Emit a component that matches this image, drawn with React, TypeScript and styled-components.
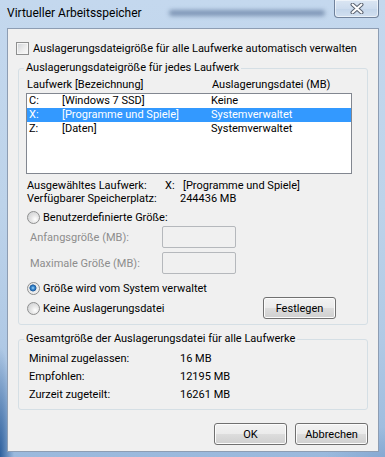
import React from "react";
import styled, { createGlobalStyle } from "styled-components";

const GlobalStyle = createGlobalStyle`
  html, body {
    margin: 0;
    padding: 0;
  }
  body {
    background: #5b86b8;
    font-family: Roboto, "Noto Sans", sans-serif;
    font-size: 11px;
    color: #000;
  }
`;

const Window = styled.div`
  width: 385px;
  height: 457px;
  box-sizing: border-box;
  display: flex;
  flex-direction: column;
  padding: 0 6px 5px 7px;
  background:
    radial-gradient(ellipse 14px 110px at 0 100%, #2d5f9c 0%, rgba(45, 95, 156, 0) 100%),
    radial-gradient(ellipse 60px 30px at 100% 100%, #86a9d2 0%, rgba(134, 169, 210, 0) 100%),
    linear-gradient(180deg, #c4d8ee 0%, #bdd3ea 45%, #b0c9e5 75%, #9ab9dd 100%);
`;

const TitleBar = styled.div`
  height: 28px;
  display: flex;
  align-items: flex-start;
`;

const Title = styled.span`
  padding-top: 5px;
  line-height: 16px;
  font-size: 12px;
  color: #000;
`;

/* blurred content of the window behind the glass */
const GlassBlur = styled.div`
  margin: 10px 0 0 27px;
  width: 156px;
  height: 6px;
  border-radius: 3px;
  background: rgba(70, 95, 135, 0.55);
  filter: blur(2px);
`;

const CloseButton = styled.div`
  margin-left: auto;
  width: 45px;
  height: 18px;
  box-sizing: border-box;
  display: flex;
  align-items: center;
  justify-content: center;
  border: 1px solid rgba(70, 90, 120, 0.7);
  border-top: none;
  border-radius: 0 0 4px 4px;
  background: linear-gradient(180deg, #dbe6f3 0%, #cddcee 50%, #c3d5ea 51%, #d2e0f0 100%);
  box-shadow: inset 0 0 0 1px rgba(255, 255, 255, 0.55);
`;

const CloseGlyph = () => (
  <svg width="14" height="11" viewBox="0 0 14 11">
    <path d="M2.5 1.5 L11.5 9.5 M11.5 1.5 L2.5 9.5" stroke="#5a6270" strokeWidth="4" strokeLinecap="round" />
    <path d="M2.5 1.5 L11.5 9.5 M11.5 1.5 L2.5 9.5" stroke="#ffffff" strokeWidth="2" strokeLinecap="round" />
  </svg>
);

const Client = styled.div`
  flex: 1;
  box-sizing: border-box;
  display: flex;
  flex-direction: column;
  padding: 11px 10px 0;
  background: #f0f0f0;
  border: 1px solid #8d9db3;
`;

const CheckRow = styled.label`
  display: flex;
  align-items: center;
  gap: 4px;
  height: 16px;
  margin-left: -2px;
  white-space: nowrap;
`;

const CheckBox = styled.span`
  width: 13px;
  height: 13px;
  box-sizing: border-box;
  border: 1px solid #8e8f8f;
  background: linear-gradient(135deg, #cfd2d6 0%, #eeeeee 60%, #fbfbfb 100%);
  box-shadow: inset 0 0 0 1px #f6f6f6;
`;

const Group = styled.fieldset<{ $top: number }>`
  margin: ${({ $top }) => $top}px 0 0;
  padding: 0;
  min-width: 0;
  border: 1px solid #d5dfe5;
  border-radius: 3px;
`;

const Legend = styled.legend`
  margin-left: 5px;
  padding: 0 2px;
  line-height: 16px;
`;

const GroupBody = styled.div<{ $pad: string }>`
  display: flex;
  flex-direction: column;
  padding: ${({ $pad }) => $pad};
`;

const ColumnHeader = styled.div`
  display: grid;
  grid-template-columns: 185px 1fr;
  height: 16px;
  line-height: 16px;
  padding-left: 8px;
`;

const ListBox = styled.div`
  margin-left: 7px;
  width: 326px;
  height: 81px;
  box-sizing: border-box;
  border: 1px solid #828790;
  background: #fff;
`;

const ListRow = styled.div<{ $selected?: boolean }>`
  display: grid;
  grid-template-columns: 33px 149px 1fr;
  height: 14px;
  line-height: 14px;
  padding-left: 2px;
  white-space: nowrap;
  background: ${({ $selected }) => ($selected ? "#3399ff" : "transparent")};
  color: ${({ $selected }) => ($selected ? "#fff" : "#000")};
`;

const InfoRow = styled.div<{ $top?: number }>`
  display: flex;
  height: 13px;
  line-height: 13px;
  padding-left: 8px;
  margin-top: ${({ $top }) => $top ?? 0}px;
  white-space: nowrap;
`;

const InfoLabel = styled.span`
  width: 138px;
`;

const InfoValue = styled.span<{ $indent?: number }>`
  margin-left: ${({ $indent }) => $indent ?? 0}px;
`;

const DriveLetter = styled.span`
  display: inline-block;
  width: 18px;
`;

const RadioRow = styled.label<{ $top: number }>`
  display: flex;
  align-items: center;
  gap: 3px;
  height: 16px;
  padding-left: 8px;
  margin-top: ${({ $top }) => $top}px;
  white-space: nowrap;
`;

const Radio = styled.span<{ $checked?: boolean }>`
  width: 13px;
  height: 13px;
  box-sizing: border-box;
  border-radius: 50%;
  border: 1px solid #8e8f8f;
  background: ${({ $checked }) =>
    $checked
      ? "radial-gradient(circle at 45% 45%, #a9dcf8 0, #3b8ad0 1.6px, #1d5a9c 3.2px, #e8e8e8 3.8px, #f8f8f8 100%)"
      : "radial-gradient(circle at 65% 65%, #ffffff 0, #e6e6e6 40%, #c9cbce 100%)"};
`;

const SizeRow = styled.div<{ $top: number }>`
  display: flex;
  align-items: center;
  height: 22px;
  padding-left: 11px;
  margin-top: ${({ $top }) => $top}px;
  color: #8d8d8d;
  white-space: nowrap;
`;

const SizeLabel = styled.span`
  width: 132px;
  margin-top: 1px;
`;

const SizeInput = styled.span`
  width: 74px;
  height: 22px;
  box-sizing: border-box;
  border: 1px solid #b5b8bc;
  border-radius: 2px;
  background: #f0f0f0;
`;

const LastRow = styled.div`
  display: flex;
  align-items: center;
  height: 22px;
  margin-top: 1px;
`;

const Button = styled.button<{ $right?: number }>`
  width: 73px;
  height: 22px;
  box-sizing: border-box;
  margin: 0 ${({ $right }) => $right ?? 0}px 0 auto;
  padding: 0;
  font: inherit;
  color: #000;
  border: 1px solid #707070;
  border-radius: 3px;
  background: linear-gradient(180deg, #f2f2f2 0%, #ebebeb 50%, #dddddd 51%, #cfcfcf 100%);
  box-shadow: inset 0 0 0 1px #fcfcfc;
`;

const TotalRow = styled.div`
  display: flex;
  height: 18px;
  line-height: 18px;
  padding-left: 10px;
`;

const TotalLabel = styled.span`
  width: 151px;
`;

const ButtonBar = styled.div`
  display: flex;
  justify-content: flex-end;
  gap: 8px;
  margin-top: 13px;

  & > ${Button} {
    margin: 0;
  }
`;

const drives = [
  { letter: "C:", name: "[Windows 7 SSD]", file: "Keine" },
  { letter: "X:", name: "[Programme und Spiele]", file: "Systemverwaltet", selected: true },
  { letter: "Z:", name: "[Daten]", file: "Systemverwaltet" },
];

const totals = [
  { label: "Minimal zugelassen:", value: "16 MB" },
  { label: "Empfohlen:", value: "12195 MB" },
  { label: "Zurzeit zugeteilt:", value: "16261 MB" },
];

export default function App() {
  return (
    <>
      <GlobalStyle />
      <Window>
        <TitleBar>
          <Title>Virtueller Arbeitsspeicher</Title>
          <GlassBlur />
          <CloseButton>
            <CloseGlyph />
          </CloseButton>
        </TitleBar>
        <Client>
          <CheckRow>
            <CheckBox />
            Auslagerungsdateigröße für alle Laufwerke automatisch verwalten
          </CheckRow>

          <Group $top={4}>
            <Legend>Auslagerungsdateigröße für jedes Laufwerk</Legend>
            <GroupBody $pad="1px 0 5px">
              <ColumnHeader>
                <span>Laufwerk [Bezeichnung]</span>
                <span>Auslagerungsdatei (MB)</span>
              </ColumnHeader>
              <ListBox>
                {drives.map((d) => (
                  <ListRow key={d.letter} $selected={d.selected}>
                    <span>{d.letter}</span>
                    <span>{d.name}</span>
                    <span>{d.file}</span>
                  </ListRow>
                ))}
              </ListBox>
              <InfoRow $top={5}>
                <InfoLabel>Ausgewähltes Laufwerk:</InfoLabel>
                <InfoValue>
                  <DriveLetter>X:</DriveLetter>[Programme und Spiele]
                </InfoValue>
              </InfoRow>
              <InfoRow>
                <InfoLabel>Verfügbarer Speicherplatz:</InfoLabel>
                <InfoValue $indent={15}>244436 MB</InfoValue>
              </InfoRow>
              <RadioRow $top={4}>
                <Radio />
                Benutzerdefinierte Größe:
              </RadioRow>
              <SizeRow $top={1}>
                <SizeLabel>Anfangsgröße (MB):</SizeLabel>
                <SizeInput />
              </SizeRow>
              <SizeRow $top={4}>
                <SizeLabel>Maximale Größe (MB):</SizeLabel>
                <SizeInput />
              </SizeRow>
              <RadioRow $top={6}>
                <Radio $checked />
                Größe wird vom System verwaltet
              </RadioRow>
              <LastRow>
                <RadioRow $top={0}>
                  <Radio />
                  Keine Auslagerungsdatei
                </RadioRow>
                <Button $right={31}>Festlegen</Button>
              </LastRow>
            </GroupBody>
          </Group>

          <Group $top={6}>
            <Legend>Gesamtgröße der Auslagerungsdatei für alle Laufwerke</Legend>
            <GroupBody $pad="3px 0 5px">
              {totals.map((t) => (
                <TotalRow key={t.label}>
                  <TotalLabel>{t.label}</TotalLabel>
                  <span>{t.value}</span>
                </TotalRow>
              ))}
            </GroupBody>
          </Group>

          <ButtonBar>
            <Button>OK</Button>
            <Button>Abbrechen</Button>
          </ButtonBar>
        </Client>
      </Window>
    </>
  );
}
